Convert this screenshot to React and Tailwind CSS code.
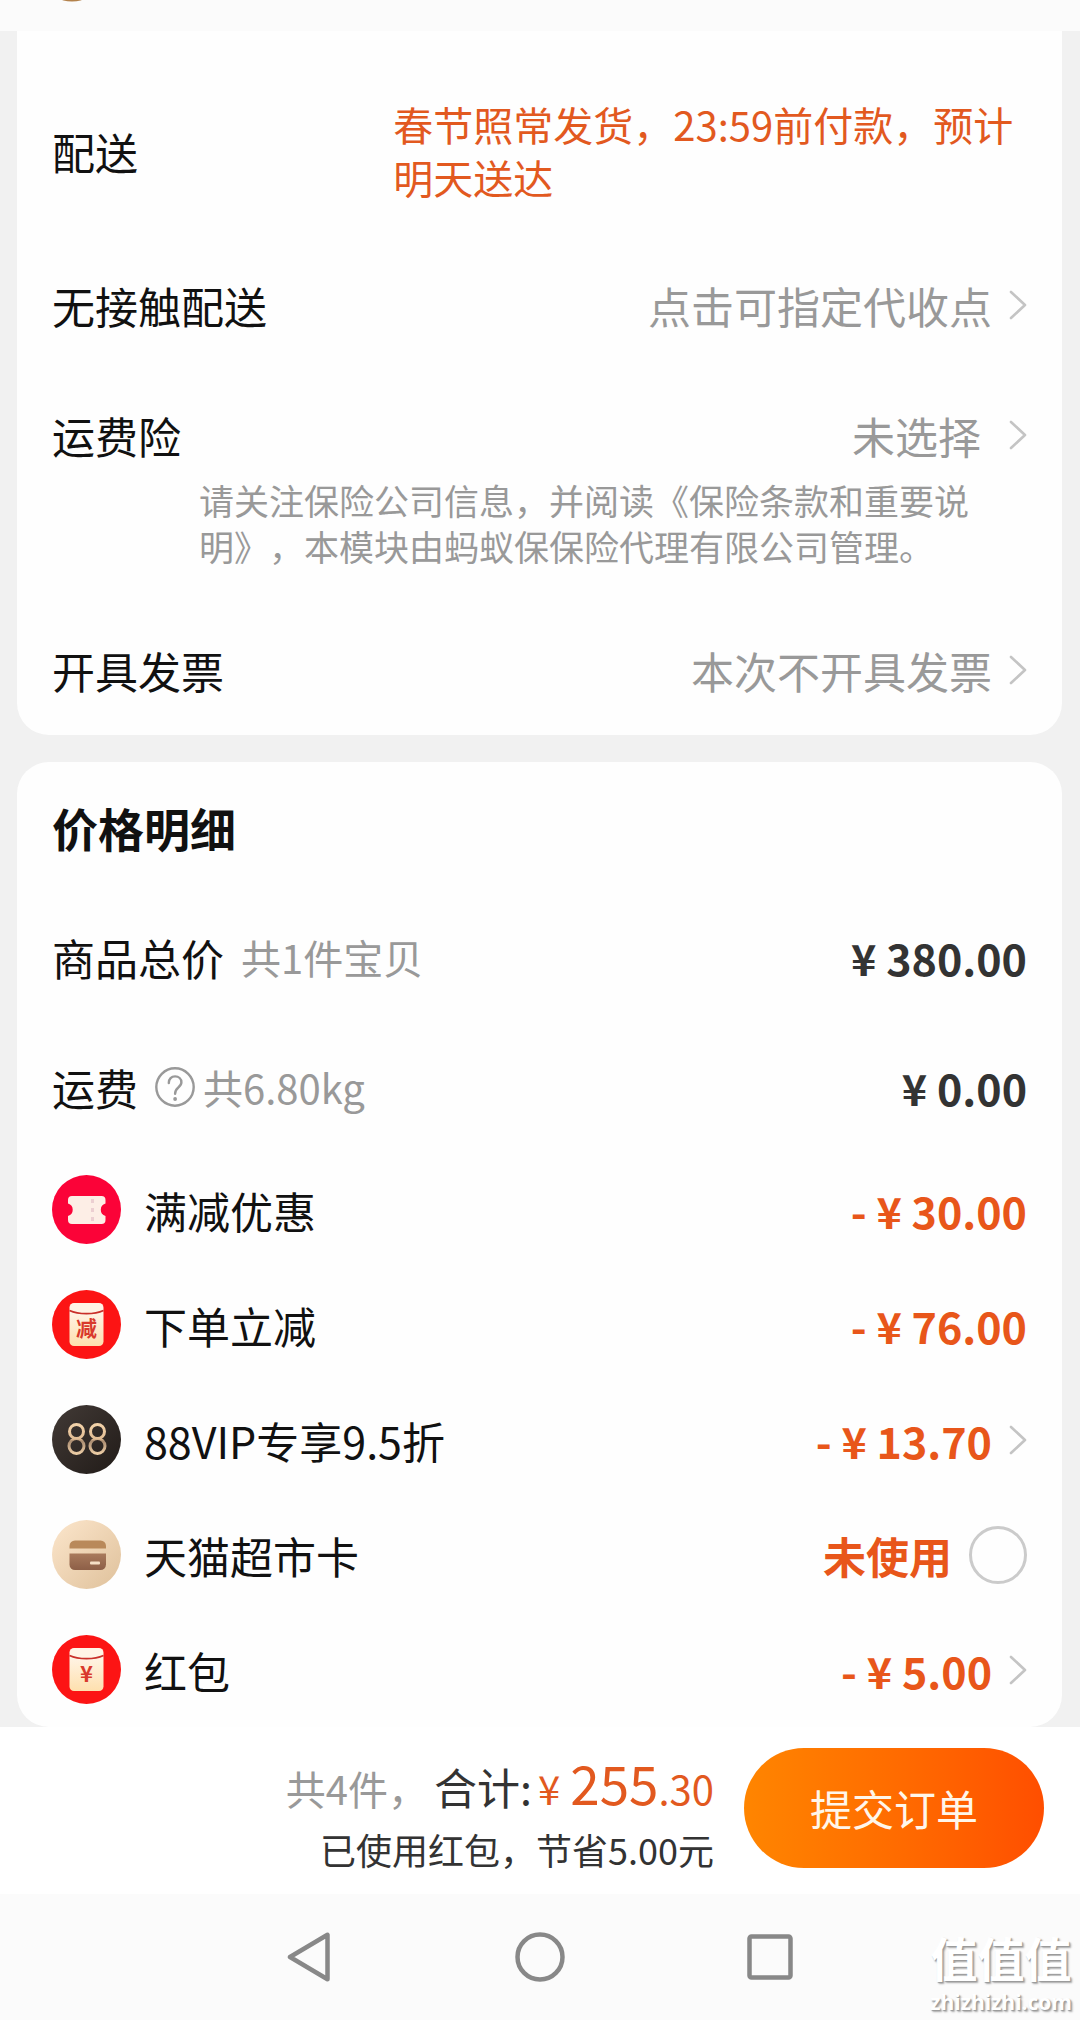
import React, { useState } from 'react'

function Chevron() {
  return (
    <svg width="18" height="32" viewBox="0 0 18 32" fill="none" stroke="#c4c4c4" strokeWidth="2.6" strokeLinecap="round" strokeLinejoin="round" className="shrink-0" aria-hidden="true">
      <path d="M2 3l14 13L2 29" />
    </svg>
  )
}

function CouponIcon() {
  return (
    <svg viewBox="0 0 69 69" className="size-[69px] shrink-0" aria-hidden="true">
      <circle cx="34.5" cy="34.5" r="34.5" fill="#fb0338" />
      <path d="M20 21h29.5a4 4 0 0 1 4 4v3.5a6.5 6.5 0 0 0 0 12.5v4a4 4 0 0 1-4 4H20a4 4 0 0 1-4-4v-4a6.5 6.5 0 0 0 0-12.5V25a4 4 0 0 1 4-4z" fill="#fdeee6" />
      <path d="M40.5 24v4M40.5 33v4M40.5 42v4" stroke="#eccfd2" strokeWidth="3" />
    </svg>
  )
}

function PacketIcon({ id, char }) {
  return (
    <svg viewBox="0 0 69 69" className="size-[69px] shrink-0" aria-hidden="true">
      <defs>
        <linearGradient id={id} x1="0" y1="0" x2="0" y2="1">
          <stop offset="0.2" stopColor="#fff4e6" />
          <stop offset="1" stopColor="#fee0ae" />
        </linearGradient>
      </defs>
      <circle cx="34.5" cy="34.5" r="34.5" fill="#fc1414" />
      <rect x="17.5" y="13" width="34" height="43" rx="4.5" fill={`url(#${id})`} />
      <path d="M17.5 20.5c9 4.2 25 4.2 34 0" fill="none" stroke="#c9302a" strokeWidth="1.6" />
      <text x="34.5" y={char === '减' ? 46 : 47} textAnchor="middle" fontSize={char === '减' ? 21 : 22} fontWeight="700" fill="#d93a2c">{char}</text>
    </svg>
  )
}

function VipIcon() {
  return (
    <svg viewBox="0 0 69 69" className="size-[69px] shrink-0" fill="none" aria-hidden="true">
      <defs>
        <linearGradient id="vip-bg" x1="0" y1="0" x2="1" y2="1">
          <stop offset="0" stopColor="#423a36" />
          <stop offset="1" stopColor="#211b18" />
        </linearGradient>
        <linearGradient id="vip-gold" gradientUnits="userSpaceOnUse" x1="0" y1="18" x2="0" y2="50">
          <stop offset="0" stopColor="#f3d3aa" />
          <stop offset="0.5" stopColor="#e2bd94" />
          <stop offset="0.56" stopColor="#a98b70" />
          <stop offset="1" stopColor="#f3d3aa" />
        </linearGradient>
      </defs>
      <circle cx="34.5" cy="34.5" r="34.5" fill="url(#vip-bg)" />
      <g stroke="url(#vip-gold)" strokeWidth="3">
        <circle cx="24.5" cy="26.5" r="7" />
        <circle cx="24.5" cy="41" r="7.5" />
        <circle cx="45.5" cy="26.5" r="7" />
        <circle cx="45.5" cy="41" r="7.5" />
      </g>
    </svg>
  )
}

function CardIcon() {
  return (
    <svg viewBox="0 0 69 69" className="size-[69px] shrink-0" aria-hidden="true">
      <defs>
        <linearGradient id="card-bg" x1="0" y1="0" x2="1" y2="1">
          <stop offset="0" stopColor="#fce6cc" />
          <stop offset="1" stopColor="#dfc19b" />
        </linearGradient>
        <linearGradient id="card-body" x1="0" y1="0" x2="0" y2="1">
          <stop offset="0" stopColor="#a97a5c" />
          <stop offset="1" stopColor="#8d5f47" />
        </linearGradient>
      </defs>
      <circle cx="34.5" cy="34.5" r="34.5" fill="url(#card-bg)" />
      <path d="M17.5 28.5V26a5.5 5.5 0 0 1 5.5-5.5h25.5A5.5 5.5 0 0 1 54 26v2.5z" fill="#b9895a" />
      <path d="M17.5 33.5H54V44.5a5.5 5.5 0 0 1-5.5 5.5H23a5.5 5.5 0 0 1-5.5-5.5z" fill="url(#card-body)" />
      <rect x="38" y="41.5" width="10" height="3" rx="1" fill="#f5dfc6" />
    </svg>
  )
}

const discounts = [
  { label: '满减优惠', value: '- ¥ 30.00', icon: <CouponIcon /> },
  { label: '下单立减', value: '- ¥ 76.00', icon: <PacketIcon id="packet-minus" char="减" /> },
  { label: '88VIP专享9.5折', value: '- ¥ 13.70', icon: <VipIcon />, link: true },
  { label: '天猫超市卡', value: '未使用', icon: <CardIcon />, check: true },
  { label: '红包', value: '- ¥ 5.00', icon: <PacketIcon id="packet-yuan" char="¥" />, link: true },
]

function DiscountRow({ item, checked, onCheck }) {
  return (
    <li className="flex items-center justify-between">
      <div className="flex items-center gap-[23px]">
        {item.icon}
        {item.check ? <label htmlFor="market-card">{item.label}</label> : <span>{item.label}</span>}
      </div>
      {item.link && (
        <button type="button" aria-label={item.label} className="flex items-center gap-[17px] font-bold text-[#e8561a]">
          {item.value}
          <Chevron />
        </button>
      )}
      {item.check && (
        <div className="flex items-center gap-[17px] font-bold text-[#e8561a]">
          {item.value}
          <input
            id="market-card"
            type="checkbox"
            checked={checked}
            onChange={(e) => onCheck(e.target.checked)}
            className="size-[58px] appearance-none rounded-full border-3 border-[#cbcbcb] checked:border-[#ff5000] checked:bg-[#ff5000]"
          />
        </div>
      )}
      {!item.link && !item.check && <span className="font-bold text-[#e8561a]">{item.value}</span>}
    </li>
  )
}

function App() {
  const [useCard, setUseCard] = useState(false)

  return (
    <div className="relative flex min-h-screen flex-col bg-[#f1f1f1] font-['Noto_Sans_CJK_SC',sans-serif] text-[43px] leading-[60px] text-[#111] [text-spacing-trim:space-all]">
      {/* TOP BAR */}
      <header className="h-[31px] overflow-hidden bg-[#fbfbfb] pl-[60px]">
        <svg width="24" height="2" viewBox="0 0 24 2" aria-hidden="true">
          <ellipse cx="12" cy="-2" rx="12" ry="3.5" fill="#b3824c" />
        </svg>
      </header>

      <main className="flex-1 pr-[18px] pl-[17px]">
        {/* DELIVERY */}
        <section className="rounded-b-[32px] bg-[#fefefe] px-[35px] pt-[67px] pb-[35px]">
          <div className="flex items-center justify-between">
            <span>配送</span>
            <p className="w-[65%] text-[40px] leading-[53px] text-[#e2591f]">春节照常发货，23:59前付款，预计明天送达</p>
          </div>
          <div className="mt-[71px] flex items-center justify-between">
            <span>无接触配送</span>
            <button type="button" className="flex items-center gap-[17px] text-[#999]">
              点击可指定代收点
              <Chevron />
            </button>
          </div>
          <div className="mt-[70px] flex items-center justify-between">
            <span>运费险</span>
            <button type="button" className="flex items-center gap-7 text-[#999]">
              未选择
              <Chevron />
            </button>
          </div>
          <p className="mt-3 pr-9 pl-[147px] text-[35px] leading-[46px] text-[#999]">
            请关注保险公司信息，并阅读《保险条款和重要说明》，本模块由蚂蚁保保险代理有限公司管理。
          </p>
          <div className="mt-[71px] flex items-center justify-between">
            <span>开具发票</span>
            <button type="button" className="flex items-center gap-[17px] text-[#999]">
              本次不开具发票
              <Chevron />
            </button>
          </div>
        </section>

        {/* PRICE DETAILS */}
        <section className="mt-[27px] rounded-[32px] bg-[#fefefe] px-[35px] pt-[35px] pb-[23px]">
          <h2 className="text-[46px] font-bold">价格明细</h2>
          <div className="mt-[70px] flex items-center justify-between">
            <div className="flex items-center gap-[17px]">
              <span>商品总价</span>
              <span className="text-[40px] text-[#999]">共1件宝贝</span>
            </div>
            <span className="font-bold text-[#333]">¥ 380.00</span>
          </div>
          <div className="mt-[70px] flex items-center justify-between">
            <div className="flex items-center gap-[17px]">
              <span>运费</span>
              <div className="flex items-center gap-2 text-[40px] text-[#999]">
                <button type="button" aria-label="运费说明">
                  <svg width="40" height="40" viewBox="0 0 40 40" fill="none" stroke="#999" strokeWidth="2.4" aria-hidden="true">
                    <circle cx="20" cy="20" r="18.7" />
                    <path d="M13.8 16c0-4.2 2.7-6.6 6.3-6.6s6.3 2.4 6.3 5.9c0 2.6-1.5 4-3.3 5.4-2 1.6-3 2.8-3 6.1" strokeLinecap="round" />
                    <circle cx="20.1" cy="32" r="1" fill="#999" strokeWidth="1.8" />
                  </svg>
                </button>
                <span>共6.80kg</span>
              </div>
            </div>
            <span className="font-bold text-[#333]">¥ 0.00</span>
          </div>
          <ul className="mt-[58px] flex flex-col gap-[46px]">
            {discounts.map((item) => (
              <DiscountRow key={item.label} item={item} checked={useCard} onCheck={setUseCard} />
            ))}
          </ul>
        </section>
      </main>

      {/* SUBMIT BAR */}
      <footer className="flex items-start justify-end gap-[30px] bg-white px-9 pt-[21px] pb-[18px]">
        <div className="text-right text-[#333]">
          <p className="flex h-[74px] items-baseline justify-end leading-[68px]">
            <span className="mr-1.5 text-[40px] text-[#999]">共4件，</span>
            <span>合计:</span>
            <span className="ml-1.5 text-[40px] text-[#e2591f]">¥</span>
            <span className="ml-2.5 text-[53px] text-[#e2591f]">255</span>
            <span className="text-[40px] text-[#e2591f]">.30</span>
          </p>
          <p className="text-[36px] leading-[54px]">已使用红包，节省5.00元</p>
        </div>
        <button type="button" className="h-[120px] w-[300px] rounded-full bg-linear-to-r from-[#ff8500] to-[#ff4e00] text-[42px] text-[#fff6ea]">
          提交订单
        </button>
      </footer>

      {/* SYSTEM NAV */}
      <nav className="bg-[#fbfbfb]">
        <div className="mx-auto grid h-[126px] max-w-[690px] grid-cols-3 place-items-center">
          <button type="button" aria-label="返回">
            <svg width="50" height="50" viewBox="0 0 50 50" fill="none" stroke="#888" strokeWidth="4.5" strokeLinejoin="round" aria-hidden="true">
              <path d="M5 25L42.5 2.8V47.2z" />
            </svg>
          </button>
          <button type="button" aria-label="主页">
            <svg width="50" height="50" viewBox="0 0 50 50" fill="none" stroke="#888" strokeWidth="4.5" aria-hidden="true">
              <circle cx="25" cy="25" r="22.5" />
            </svg>
          </button>
          <button type="button" aria-label="最近任务">
            <svg width="50" height="50" viewBox="0 0 50 50" fill="none" stroke="#888" strokeWidth="4.5" aria-hidden="true">
              <rect x="4.5" y="4.5" width="41" height="41" rx="2" />
            </svg>
          </button>
        </div>
      </nav>

      {/* WATERMARK */}
      <div className="absolute right-2 bottom-1 flex flex-col items-center font-bold text-white [text-shadow:1px_1px_1px_#999,2px_2px_2px_#aaa]">
        <span className="font-['Liberation_Sans','Noto_Sans_CJK_SC',sans-serif] text-[47px] leading-[54px]">值值值</span>
        <span className="font-['Open_Sans',sans-serif] text-[21px] leading-[28px]">zhizhizhi.com</span>
      </div>
    </div>
  )
}

export default App
